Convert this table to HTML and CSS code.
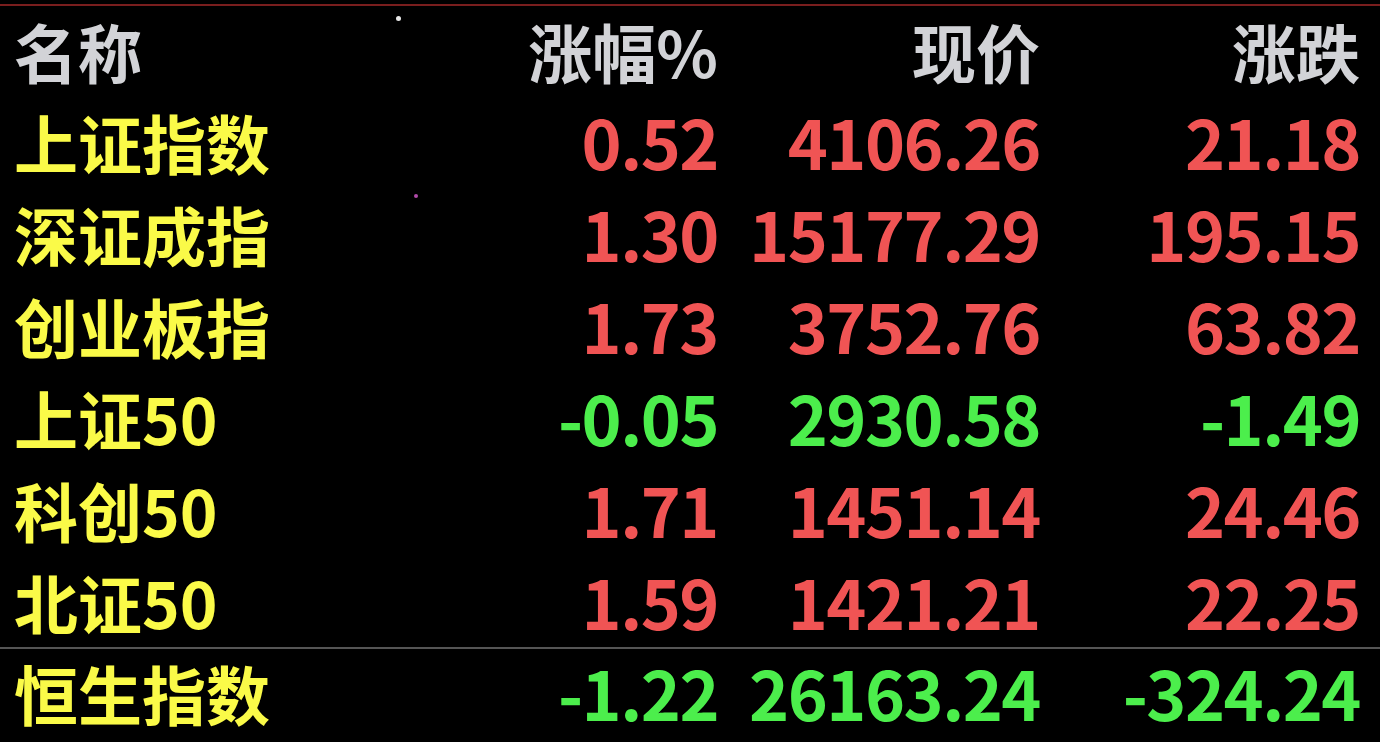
FILE: index.html
```html
<!DOCTYPE html>
<html lang="zh-CN">
<head>
<meta charset="utf-8">
<title>行情</title>
<link rel="stylesheet" href="styles.css">
</head>
<body>
<div class="board">
  <div class="topline"></div>
  <div class="table">
    <div class="row head">
      <div class="name">名称</div>
      <div class="num">涨幅%</div>
      <div class="num">现价</div>
      <div class="num">涨跌</div>
    </div>
    <div class="row up">
      <div class="name">上证指数</div>
      <div class="num">0.52</div>
      <div class="num">4106.26</div>
      <div class="num">21.18</div>
    </div>
    <div class="row up">
      <div class="name">深证成指</div>
      <div class="num">1.30</div>
      <div class="num">15177.29</div>
      <div class="num">195.15</div>
    </div>
    <div class="row up">
      <div class="name">创业板指</div>
      <div class="num">1.73</div>
      <div class="num">3752.76</div>
      <div class="num">63.82</div>
    </div>
    <div class="row down">
      <div class="name">上证50</div>
      <div class="num">-0.05</div>
      <div class="num">2930.58</div>
      <div class="num">-1.49</div>
    </div>
    <div class="row up">
      <div class="name">科创50</div>
      <div class="num">1.71</div>
      <div class="num">1451.14</div>
      <div class="num">24.46</div>
    </div>
    <div class="row up">
      <div class="name">北证50</div>
      <div class="num">1.59</div>
      <div class="num">1421.21</div>
      <div class="num">22.25</div>
    </div>
    <div class="row down last">
      <div class="name">恒生指数</div>
      <div class="num">-1.22</div>
      <div class="num">26163.24</div>
      <div class="num">-324.24</div>
    </div>
  </div>
  <span class="speck white"></span>
  <span class="speck pink"></span>
</div>
</body>
</html>
```

FILE: styles.css
```css
html, body {
  margin: 0;
  padding: 0;
  background: #000;
}
.board {
  position: relative;
  width: 1380px;
  height: 742px;
  overflow: hidden;
  background: #000;
  font-family: "Noto Sans CJK SC", "Noto Sans", sans-serif;
  font-weight: 700;
}
.topline {
  height: 2px;
  margin-top: 4px;
  background: #7a1e1e;
}
.table {
  display: flex;
  flex-direction: column;
}
.row {
  display: grid;
  grid-template-columns: 1fr 220px 322px 320px;
  padding: 0 20px 0 14px;
  height: 92px;
  align-items: start;
}
.row > div {
  line-height: 92px;
}
.row.head {
  height: 89px;
}
.row.head > div {
  line-height: 89px;
}
.row.last {
  border-top: 2px solid #555;
  height: 93px;
}
.row.last > div {
  line-height: 86px;
}
.name {
  font-size: 64px;
  color: #fafa48;
  white-space: nowrap;
}
.head .name {
  color: #d2d3d7;
}
.num {
  text-align: right;
  font-size: 68px;
  letter-spacing: -1.5px;
  white-space: nowrap;
}
.head .num {
  font-size: 64px;
  letter-spacing: 0;
  color: #d2d3d7;
}
.up .num {
  color: #f05454;
}
.down .num {
  color: #4cee4c;
}
.speck {
  position: absolute;
  border-radius: 50%;
}
.speck.white {
  left: 396px;
  top: 16px;
  width: 5px;
  height: 5px;
  background: #e8e8e8;
}
.speck.pink {
  left: 414px;
  top: 194px;
  width: 4px;
  height: 4px;
  background: #b04aa8;
}
```
